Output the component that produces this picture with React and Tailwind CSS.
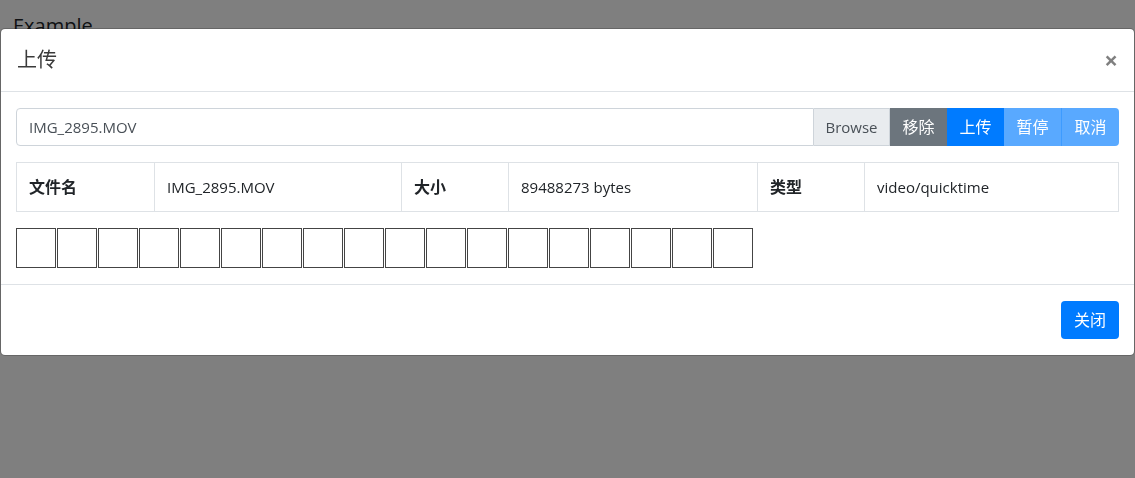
import React from "react";

const boxes = Array.from({ length: 18 });

export default function App() {
  return (
    <div className="relative min-h-[478px] bg-white font-['Open_Sans','Noto_Sans_CJK_SC',sans-serif] text-[#212529]">
      {/* background page */}
      <div className="px-[13px] pt-[14px]">
        <div className="text-[20px] leading-[24px]">Example</div>
        <div className="mt-[293px] flex text-[16px] leading-[24px] text-[#0a2a80]">
          <span className="ml-[150px]">sample typg</span>
          <span className="ml-[250px]">image-copy.jpg</span>
        </div>
      </div>

      {/* backdrop + modal */}
      <div className="fixed inset-0 bg-black/50">
        <div className="mt-[28px] w-[1135px] rounded-[5px] border border-black/20 bg-white bg-clip-padding">
          {/* header */}
          <div className="flex items-center justify-between border-b border-[#dee2e6] px-4 py-4">
            <h5 className="text-[20px] leading-[30px] font-normal text-[#3a3a3a]">上传</h5>
            <button className="text-[24px] font-bold leading-none text-black/50">×</button>
          </div>

          {/* body */}
          <div className="flex flex-col gap-4 px-[15px] py-4">
            <div className="flex h-[38px]">
              <div className="flex flex-1 items-center rounded-l-[4px] border border-[#ced4da] px-3 text-[15px] text-[#495057]">
                IMG_2895.MOV
              </div>
              <div className="flex w-[76px] items-center justify-center border border-l-0 border-[#ced4da] bg-[#e9ecef] text-[15px] text-[#495057]">
                Browse
              </div>
              <button className="w-[57px] bg-[#6c757d] text-[16px] text-white">移除</button>
              <button className="w-[57px] bg-[#007bff] text-[16px] text-white">上传</button>
              <button className="w-[57px] bg-[#59a9ff] text-[16px] text-white">暂停</button>
              <button className="w-[58px] rounded-r-[4px] border-l border-[#3d9bff] bg-[#59a9ff] text-[16px] text-white">取消</button>
            </div>

            <table className="w-full border-collapse text-[15px]">
              <tbody>
                <tr className="h-[49px]">
                  <td className="w-[138px] border border-[#dee2e6] px-3 font-bold text-[16px]">文件名</td>
                  <td className="w-[247px] border border-[#dee2e6] px-3 text-[#212529]">IMG_2895.MOV</td>
                  <td className="w-[107px] border border-[#dee2e6] px-3 font-bold text-[16px]">大小</td>
                  <td className="w-[249px] border border-[#dee2e6] px-3">89488273 bytes</td>
                  <td className="w-[107px] border border-[#dee2e6] px-3 font-bold text-[16px]">类型</td>
                  <td className="border border-[#dee2e6] px-3">video/quicktime</td>
                </tr>
              </tbody>
            </table>

            <div className="flex gap-px">
              {boxes.map((_, i) => (
                <div key={i} className="h-[40px] w-[40px] border border-[#444]" />
              ))}
            </div>
          </div>

          {/* footer */}
          <div className="flex justify-end border-t border-[#dee2e6] px-[15px] py-4">
            <button className="h-[38px] w-[58px] rounded-[4px] bg-[#007bff] text-[16px] text-white">关闭</button>
          </div>
        </div>
      </div>
    </div>
  );
}
